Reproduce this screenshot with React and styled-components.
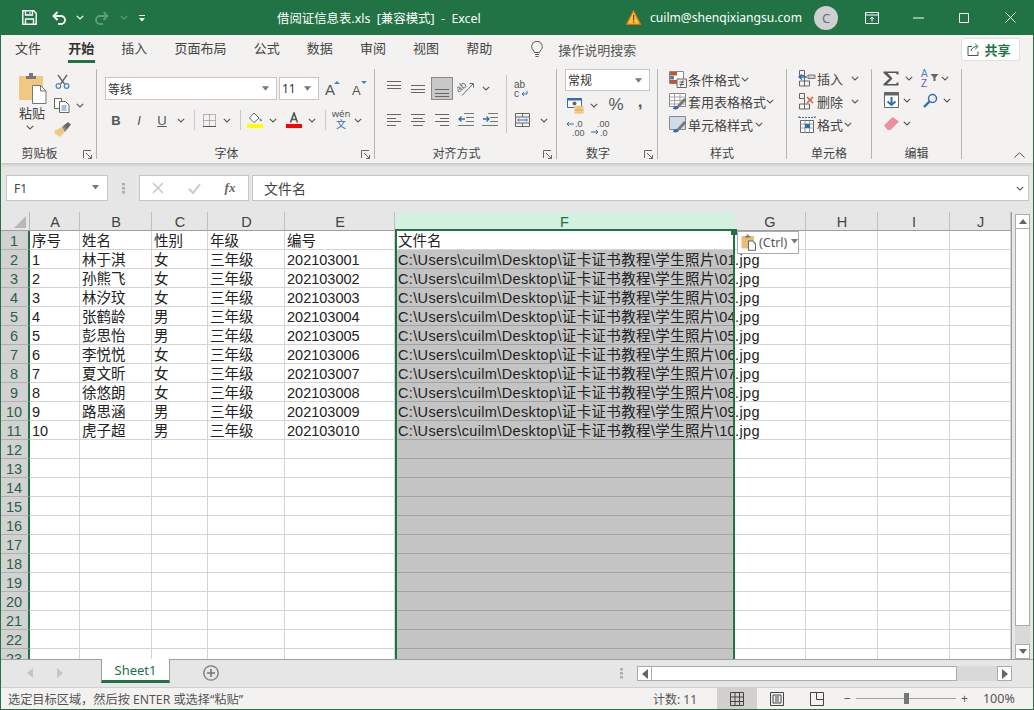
import React from 'react';
import styled, { createGlobalStyle } from 'styled-components';

const Global = createGlobalStyle`
  html, body { margin: 0; padding: 0; background: #e6e6e6; overflow: hidden; }
  * { box-sizing: border-box; }
  svg { display: block; flex: none; }
`;
const UI = `"Noto Sans", "Noto Sans CJK SC", sans-serif`;
const CELL = `"Liberation Sans", "Noto Sans CJK SC", sans-serif`;
const GREEN = '#217346';

const Win = styled.div`
  width: 1034px; height: 710px; display: flex; flex-direction: column; overflow: hidden;
  border: 1px solid ${GREEN}; border-top: 0; background: #e6e6e6; font-family: ${UI}; color: #444;
`;
const TitleBar = styled.div`height: 35px; margin: 0 -1px; background: ${GREEN}; display: flex; align-items: center; color: #fff; font-size: 13px; flex: none;`;
const Slot = styled.div`
  width: ${p => p.$w}px; flex: none; display: flex; align-items: center; justify-content: center; height: 100%;
  margin-left: ${p => p.$ml || 0}px;
`;
const TitleText = styled.div`width: 346px; white-space: pre; font-size: 12.4px;`;
const Email = styled.div`width: 153px; margin-left: 7px; white-space: nowrap; font-size: 12.1px;`;
const Avatar = styled.div`width: 24px; height: 24px; margin-left: 11px; border-radius: 50%; background: #d0d0d0; color: #5b6f8a; font-size: 13px; display: flex; align-items: center; justify-content: center;`;

const Tabs = styled.div`height: 28px; background: #f3f2f1; display: flex; align-items: center; padding-left: 14px; gap: 27px; font-size: 13px; flex: none;`;
const Tab = styled.div`
  height: 28px; line-height: 27px; position: relative; white-space: nowrap; margin-left: ${p => p.$first ? 0 : 0.15}px; font-weight: ${p => p.$active ? 700 : 400}; color: ${p => p.$active ? '#333' : '#444'};
  ${p => p.$active && `&::after { content: ''; position: absolute; left: 0; right: -1px; bottom: 0; height: 3px; background: ${GREEN}; }`}
`;
const Tell = styled.div`display: flex; align-items: center; gap: 15px; margin-left: 12px; white-space: nowrap; color: #555;`;
const Share = styled.div`
  margin-left: auto; margin-right: 13px; width: 59px; height: 23px; background: #fff; border: 1px solid #e1dfdd; border-radius: 2px;
  display: flex; align-items: center; justify-content: center; gap: 3px; padding-right: 3px; color: ${GREEN}; font-weight: 700;
`;

const Ribbon = styled.div`height: 100px; background: #f3f2f1; display: flex; align-items: flex-start; padding-top: 6px; flex: none; box-shadow: 0 2px 3px rgba(0,0,0,.14); position: relative; z-index: 2;`;
const Group = styled.div`width: ${p => p.$w}px; height: 90px; border-right: 1px solid #b4b4b4; display: flex; flex-direction: column; flex: none;`;
const GroupBody = styled.div`flex: 1; min-height: 0; display: flex; padding-left: ${p => p.$pl || 0}px; font-size: 13px;`;
const GroupFoot = styled.div`height: 15px; padding-top: 3px; display: flex; align-items: center; font-size: 12px; color: #444; flex: none;`;
const FootLabel = styled.div`flex: 1; text-align: center;`;
const Launcher = styled.div`width: 18px; display: flex; align-items: center; justify-content: center; padding: 2px 0 0 1px;`;
const Col = styled.div`display: flex; flex-direction: column; flex: none; width: ${p => p.$w ? p.$w + 'px' : 'auto'};`;
const Row = styled.div`display: flex; align-items: center; height: ${p => p.$h}px; margin-top: ${p => p.$mt || 0}px; flex: none;`;
const PasteLabel = styled.div`text-align: center; line-height: 16px; margin-top: 0;`;
const Select = styled.div`
  width: ${p => p.$w}px; height: ${p => p.$h}px; background: #fff; border: 1px solid #c6c6c6; flex: none; margin-right: ${p => p.$mr || 0}px;
  display: flex; align-items: center; justify-content: space-between; padding: 0 7px 0 2px; font-size: 12px; color: #333;
`;
const VSep = styled.div`width: 1px; height: ${p => p.$h}px; background: #c8c8c8; flex: none;`;
const Pressed = styled.div`width: 22px; height: 23px; border: 1px solid #8a8a8a; background: #c8c8c8; display: flex; align-items: center; justify-content: center;`;
const ListText = styled.div`white-space: nowrap; margin-left: ${p => p.$ml ?? 1}px; width: ${p => p.$w ? p.$w + 'px' : 'auto'};`;
const Collapse = styled.div`margin-left: auto; align-self: flex-end; padding: 0 8px 5px 0;`;

const FormulaBar = styled.div`height: 49px; background: #e6e6e6; display: flex; align-items: flex-start; padding: 12px 0 0 5px; flex: none;`;
const NameBox = styled.div`width: 102px; height: 26px; background: #fff; border: 1px solid #c6c6c6; display: flex; align-items: center; justify-content: space-between; padding: 0 7px; font-size: 12px; color: #444;`;
const Grip = styled.div`width: 31px; height: 26px; display: flex; align-items: center; justify-content: center;`;
const FxBox = styled.div`width: 110px; height: 26px; background: #fff; border: 1px solid #c6c6c6; display: flex; align-items: center; font-family: "Liberation Serif", serif; font-style: italic; font-size: 13px; font-weight: 700; color: #666;`;
const Input = styled.div`width: 777px; height: 26px; margin-left: 3px; background: #fff; border: 1px solid #c6c6c6; display: flex; align-items: center; padding-left: 11px; font-size: 14px; color: #444;`;
const FxChevron = styled.div`margin-left: auto; padding-right: 4px;`;

const Sheet = styled.div`height: 447px; display: flex; flex: none;`;
const GridWrap = styled.div`width: 1011px; height: 447px; position: relative; overflow: hidden; border-right: 1px solid #9f9f9f; flex: none;`;
const Grid = styled.div`
  display: grid; grid-template-columns: 29px 50px 72px 56px 77px 110px 339px 72px 72px 72px 61px; grid-auto-rows: 19px;
  font-family: ${CELL}; font-size: 14.5px; color: #222; background: #fff;
`;
const Corner = styled.div`background: #e6e6e6; border-bottom: 1px solid #9f9f9f; border-right: 1px solid #b8b8b8; display: flex; justify-content: flex-end; align-items: flex-end; padding: 0 3px 2px 0;`;
const ColHead = styled.div`
  background: ${p => p.$sel ? '#d3f0e0' : '#e6e6e6'}; color: ${p => p.$sel ? '#1f6e45' : '#444'};
  border-bottom: 1px solid #9f9f9f; border-right: 1px solid ${p => p.$sel ? '#d3f0e0' : '#c0c0c0'};
  text-align: center; line-height: 20px; padding-left: 1px; overflow: hidden;
`;
const RowHead = styled.div`
  background: #d2d2d2; color: #2b6048; border-bottom: 1px solid #b0b0b0; border-right: 2px solid ${GREEN};
  text-align: center; line-height: 20px; padding-right: 1px; overflow: hidden;
`;
const Cell = styled.div`
  background: ${p => p.$sel ? '#c4c4c4' : '#fff'};
  border-bottom: 1px solid ${p => p.$sel ? '#a3a3a3' : '#d4d4d4'}; border-right: 1px solid #d4d4d4;
  padding-left: ${p => p.$pl}px; letter-spacing: ${p => p.$ls || 0}px; line-height: 21px; white-space: nowrap; overflow: hidden;
`;
const SelFrame = styled.div`position: absolute; left: 394px; top: 17px; width: 340px; height: 440px; border: 2px solid ${GREEN}; border-bottom: 0; pointer-events: none;`;
const Handle = styled.div`position: absolute; left: 730px; top: 17px; width: 6px; height: 6px; background: ${GREEN};`;
const PasteTag = styled.div`
  position: absolute; left: 736px; top: 19px; width: 62px; height: 23px; background: #fff; border: 1px solid #ababab;
  display: flex; align-items: center; padding-left: 3px; gap: 3px; font-family: ${UI}; font-size: 12.5px; color: #555;
`;
const VScroll = styled.div`flex: 1; display: flex; flex-direction: column; padding: 2px 0 0 3px; background: #e6e6e6;`;
const ScrollBtn = styled.div`width: ${p => p.$w || 15}px; height: 15px; background: #fff; border: 1px solid #ababab; display: flex; align-items: center; justify-content: center; flex: none;`;
const VThumb = styled.div`width: 15px; height: 397px; background: #fff; border: 1px solid #ababab; border-top: 0; flex: none;`;
const VTrack = styled.div`width: 15px; height: 18px; background: #d9d9d9; flex: none;`;

const SheetBar = styled.div`height: 28px; background: #e6e6e6; border-top: 1px solid #9f9f9f; display: flex; align-items: flex-start; flex: none;`;
const NavSlot = styled.div`width: ${p => p.$w}px; height: 26px; flex: none; display: flex; align-items: center; justify-content: center;`;
const SheetTab = styled.div`
  width: 69px; height: 24px; margin-top: -1px; background: #fff; border: 1px solid #9f9f9f; border-top: 0; border-bottom: 3px solid ${GREEN};
  color: ${GREEN}; font-size: 13px; text-align: center; line-height: 22px; flex: none;
`;
const HScroll = styled.div`display: flex; margin-left: 8px; margin-top: 6px; height: 15px;`;
const HThumb = styled.div`width: 305px; height: 15px; background: #fff; border: 1px solid #ababab; border-left: 0; flex: none;`;
const HTrack = styled.div`width: 40px; height: 15px; background: #d9d9d9; flex: none;`;
const Status = styled.div`height: 22px; background: #f3f2f1; border-top: 1px solid #d0d0d0; display: flex; align-items: center; padding-left: 7px; font-size: 12.2px; color: #555; flex: none;`;
const StatusText = styled.div`width: 645px; white-space: nowrap;`;
const Count = styled.div`width: 64px; white-space: nowrap; font-size: 12px;`;
const ViewBtn = styled.div`width: 40px; height: 21px; background: ${p => p.$on ? '#d2d0ce' : 'transparent'}; display: flex; align-items: center; justify-content: center; flex: none;`;
const Zoomer = styled.div`display: flex; align-items: center; margin-left: 7px; gap: 5px;`;
const Track = styled.div`width: 100px; height: 1px; background: #a0a0a0; position: relative;`;
const Thumb = styled.div`position: absolute; left: 48px; top: -5px; width: 5px; height: 11px; background: #777;`;
const Pct = styled.div`margin-left: 15px; font-size: 12.5px;`;

const Chev = ({ c = '#555' }) => <svg width="8" height="5" viewBox="0 0 8 5"><path d="M.8.8 4 4 7.2.8" fill="none" stroke={c} strokeWidth="1.1" /></svg>;
const Drop = ({ c = '#777', up, w = 8 }) => <svg width={w} height="5" viewBox="0 0 8 5"><path d={up ? 'M0 5h8L4 0z' : 'M0 0h8L4 5z'} fill={c} /></svg>;
const Launch = () => <svg width="9" height="9" viewBox="0 0 9 9"><path d="M.5 8V.5H8M8.5 8.5 3 3M8.5 5v3.5H5" fill="none" stroke="#666" /></svg>;

const Save = () => <svg width="15" height="15" viewBox="0 0 15 15" fill="none" stroke="#fff" strokeWidth="1.4"><path d="M.8.8h11l2.400 2.400v11H.8z" /><path d="M3.500 1v4h7V1M3.500 14V9h8v5" /><path d="M8 2.200v1.600" /></svg>;
const Undo = ({ c = '#fff', flip }) => <svg width="15" height="14" viewBox="0 0 15 14" fill="none" stroke={c} strokeWidth="1.8" style={flip ? { transform: 'scaleX(-1)' } : undefined}><path d="M5.500 1 1.500 5l4 4" /><path d="M2 5h7a4 4 0 0 1 0 8H6" /></svg>;
const Custom = () => <svg width="8" height="8" viewBox="0 0 8 8"><path d="M1 1h6v1H1z" fill="#fff" /><path d="M1 4h6L4 7.500z" fill="#fff" /></svg>;
const Warn = () => <svg width="15" height="15" viewBox="0 0 15 15"><path d="M7.500 .8 14.600 14.400H.4z" fill="#f6c23c" stroke="#d96f14" strokeWidth="1.2" /><path d="M7 5h1.200v5.400H7zM7 11.400h1.200v1.300H7z" fill="#6b3c10" /></svg>;
const RibbonOpt = () => <svg width="14" height="12" viewBox="0 0 14 12" fill="none" stroke="#fff"><path d="M.5.500h13v11H.5zM.5 3h13" /><path d="M7 9.500V5M5 7l2-2 2 2" /></svg>;
const Min = () => <svg width="11" height="2" viewBox="0 0 11 2"><path d="M0 1h11" stroke="#fff" /></svg>;
const Max = () => <svg width="10" height="10" viewBox="0 0 10 10"><path d="M.5.500h9v9h-9z" fill="none" stroke="#fff" /></svg>;
const Close = () => <svg width="11" height="11" viewBox="0 0 11 11"><path d="M.5.500l10 10M10.500.500l-10 10" stroke="#fff" /></svg>;
const Bulb = () => <svg width="12" height="17" viewBox="0 0 12 17" fill="none" stroke="#555"><path d="M3.500 11.500C3 9.500.7 8.500.7 5.600a5.300 5.300 0 0 1 10.600 0c0 2.900-2.300 3.900-2.800 5.900z" /><path d="M4 13.500h4M4.500 15.500h3" /></svg>;
const ShareIc = () => <svg width="14" height="14" viewBox="0 0 14 14" fill="none" stroke="#555"><path d="M5 4.500H1v9h10v-4" /><path d="M4 9c.5-3 3-4.500 6-4.500M8 1.500l3 3-3 3" stroke={GREEN} /></svg>;

const PasteIc = () => <svg width="29" height="31" viewBox="0 0 29 31"><path d="M1 3h24v24H1z" fill="#f0c87f" /><path d="M8 3h10v3H8zM11 0h4v3h-4z" fill="#777" /><path d="M14.500 12.500h8l5.500 5.500v12.500H14.500z" fill="#fff" stroke="#777" /><path d="M22.500 12.500V18H28" fill="none" stroke="#777" /></svg>;
const Scissors = () => <svg width="15" height="15" viewBox="0 0 15 15" fill="none"><path d="M3 1l6.500 9M12 1 5.500 10" stroke="#666" strokeWidth="1.3" /><circle cx="3.400" cy="12" r="2.300" stroke="#4d82b8" strokeWidth="1.200" /><circle cx="11.600" cy="12" r="2.300" stroke="#4d82b8" strokeWidth="1.200" /></svg>;
const Copy = () => <svg width="16" height="15" viewBox="0 0 16 15" fill="#fff" stroke="#666"><path d="M.5.500h7v10h-7z" /><path d="M5.500 3.500h6l3.500 3.500v7.500H5.500z" /><path d="M7.500 8h5M7.500 10h5M7.500 12h5" stroke="#4d82b8" /></svg>;
const Brush = () => <svg width="17" height="15" viewBox="0 0 17 15"><path d="M0 9 8 5l3 5-5 4.500H4L3 12l-1 1z" fill="#efc781" /><path d="M8.500 4.500 14 0l3 2.500-4 5z" fill="#666" /><path d="M8 5l3 5 2-2.500-3-4z" fill="#888" /></svg>;
const GrowA = ({ small }) => <svg width="16" height="17" viewBox="0 0 16 17"><text x="0" y="15" fontFamily="Liberation Sans" fontSize={small ? 13 : 15} fill="#555">A</text><path d={small ? 'M9 1h6l-3 3z' : 'M9 4h6l-3-3z'} fill="#4d82b8" /></svg>;
const BItalic = styled.span`font-family: "Liberation Sans", sans-serif; font-size: 13px; color: #555; font-weight: ${p => p.$b ? 700 : 400}; font-style: ${p => p.$i ? 'italic' : 'normal'}; text-decoration: ${p => p.$u ? 'underline' : 'none'};`;
const Borders = () => <svg width="13" height="13" viewBox="0 0 13 13" fill="none" stroke="#777" strokeDasharray="1 1"><path d="M.5.500h12v12H.500zM6.500.500v12M.500 6.500h12" /><path d="M0 12.500h13" stroke="#555" strokeDasharray="none" /></svg>;
const Fill = () => <svg width="16" height="16" viewBox="0 0 16 16"><path d="M7 1 2.500 6 7 10.500 12 6z" fill="#fff" stroke="#666" /><path d="M12.500 6.500c2 0 2.500 1.500 2.500 2.500h-2z" fill="#4d82b8" /><path d="M0 12h16v4H0z" fill="#ff0" /></svg>;
const FontColor = () => <svg width="16" height="16" viewBox="0 0 16 16"><path d="M4.500 10.500 8 1l3.500 9.500M5.800 7.500h4.400" fill="none" stroke="#555" strokeWidth="1.600" /><path d="M0 12h16v4H0z" fill="#f00" /></svg>;
const WenIc = () => <svg width="18" height="22" viewBox="0 0 18 22"><text x="9" y="8" textAnchor="middle" fontFamily="Noto Sans" fontSize="9.500" fill="#555">wén</text><text x="9" y="19" textAnchor="middle" fontFamily="Noto Sans CJK SC" fontSize="10" fill="#2f6db5">文</text></svg>;

const Lines = ({ y, n = 3, gap = 3.5, indent = [], h = 18 }) => (
  <svg width="14" height={h} viewBox={`0 0 14 ${h}`}>
    {Array.from({ length: n }, (_, i) => {
      const a = indent[i] || [0, 14];
      return <path key={i} d={`M${a[0]} ${Math.round(y + i * gap) + .5}H${a[1]}`} stroke="#666" />;
    })}
  </svg>
);
const Indent = ({ right }) => <svg width="16" height="14" viewBox="0 0 16 14" fill="none"><path d="M6 .5h10M8 4.500h8M8 8.500h8M0 12.500h16" stroke="#777" /><path d={right ? 'M1 6h6M4.500 3.500 7 6 4.500 8.500' : 'M1 6h6M3.500 3.500 1 6l2.500 2.500'} stroke="#2f6db5" strokeWidth="1.300" /></svg>;
const Orient = () => <svg width="18" height="17" viewBox="0 0 18 17" fill="none"><text x="0" y="10" transform="rotate(-40 5 9)" fontFamily="Liberation Sans" fontSize="10" fill="#666" stroke="none">ab</text><path d="M5 15.500 16 4M12.500 3.500h4v4" stroke="#666" /></svg>;
const WrapIc = () => <svg width="16" height="18" viewBox="0 0 16 18"><text x="0" y="8" fontSize="10" fontFamily="Liberation Sans" fill="#555">ab</text><text x="0" y="17" fontSize="10" fontFamily="Liberation Sans" fill="#555">c</text><path d="M13 11v3H8m2-2-2 2 2 2" fill="none" stroke="#2f6db5" /></svg>;
const Merge = () => <svg width="15" height="14" viewBox="0 0 15 14" fill="none" stroke="#666"><path d="M.5.500h14v13H.5zM.5 4h14M.5 10h14M7.500 10v3.500M7.500.500V4" /><path d="M3 7h9M4 5.500 2.500 7 4 8.500M11 5.500 12.500 7 11 8.500" stroke="#2f6db5" /></svg>;
const Currency = () => <svg width="18" height="17" viewBox="0 0 18 17"><path d="M.5 1.500h14v9H.5z" fill="#fff" stroke="#2f6db5" /><path d="M.5 1.500h14v2H.5z" fill="#2f6db5" /><circle cx="7.500" cy="6.500" r="2" fill="#666" /><ellipse cx="12" cy="10" rx="5" ry="1.600" fill="#f0c87f" /><ellipse cx="12" cy="12.800" rx="5" ry="1.600" fill="#e9b85f" /><ellipse cx="12" cy="15.300" rx="5" ry="1.500" fill="#f0c87f" /></svg>;
const Pct2 = styled.span`font-family: "Liberation Sans", sans-serif; font-size: 17px; color: #555;`;
const Comma = styled.span`font-family: "Liberation Sans", sans-serif; font-size: 17px; font-weight: 700; color: #555; line-height: 10px; padding-bottom: 6px;`;
const DecIc = ({ inc }) => <svg width="20" height="18" viewBox="0 0 20 18">
  <text x={inc ? 6 : 9} y="8" fontFamily="Liberation Sans" fontSize="9" fill="#555">{inc ? '.00' : '.0'}</text>
  <text x={inc ? 9 : 6} y="17" fontFamily="Liberation Sans" fontSize="9" fill="#555">{inc ? '.0' : '.00'}</text>
  <path d={inc ? 'M0 13h7M5 11l2 2-2 2' : 'M1 5h7M3 3 1 5l2 2'} fill="none" stroke="#2f6db5" />
</svg>;
const CondFmt = () => <svg width="18" height="17" viewBox="0 0 18 17"><path d="M.5.500h14v12H.500z" fill="#fff" stroke="#888" /><path d="M1 1h7v3.500H1z" fill="#c8502d" /><path d="M1 5h4v3.500H1z" fill="#4d82b8" /><path d="M1 9h7v3.500H1z" fill="#c8502d" /><path d="M8 8h9.500v8.500H8z" fill="#f3f2f1" stroke="#666" /><path d="M10.500 11h4.500M10.500 13.500h4.500M14 9.500l-2.500 6" stroke="#555" /></svg>;
const TableFmt = ({ cell }) => <svg width="18" height="17" viewBox="0 0 18 17"><path d="M.5.500h16v13H.500z" fill={cell ? '#cfdcec' : '#fff'} stroke="#888" />{!cell && <path d="M.5 4h16M.5 7.500h16M.5 11h16M5.500.500v13M11 .500v13" stroke="#a5a5a5" />}<path d="M8 13 15 5l2.500 2-7 7z" fill="#777" /><path d="M4 16c0-3 4-4 6-2 0 2-3 3-6 2z" fill="#2f6db5" /></svg>;
const CellIns = ({ del }) => <svg width="18" height="17" viewBox="0 0 18 17" fill="none"><path d="M1.500.500h5v5h-5zM1.500 11h5v5h-5zM6.500 11h5v5h-5z" stroke="#666" /><path d="M1.500 5.500h5v5.500" stroke="#666" />{del
  ? <path d="M9 4l6 6M15 4l-6 6" stroke="#d9623b" strokeWidth="1.600" />
  : <><path d="M10 5h7v3.500h-7z" fill="#d0d0d0" stroke="#777" /><path d="M1 7h8M4 4.500 1 7l3 2.500" stroke="#2f6db5" strokeWidth="1.400" /></>}</svg>;
const CellFmt = () => <svg width="18" height="17" viewBox="0 0 18 17" fill="none"><path d="M2.500 4.500h13v12h-13z" fill="#fff" stroke="#666" /><path d="M2.500 8h13M2.500 12h13M7 4.500v12M11.500 4.500v12" stroke="#999" /><path d="M7 8h5v4H7z" fill="#2f6db5" /><path d="M1 1.500h16M1 0v3M17 0v3" stroke="#2f6db5" strokeDasharray="2 1" /></svg>;
const Sigma = () => <svg width="16" height="15" viewBox="0 0 16 15"><path d="M.5.500h15v3h-1.500l-1-1.500H4.500l5 5.500-5.500 5.500h9l1-1.500h1.500v3H.500v-1.500L6.500 7.500.5 2z" fill="#555" /></svg>;
const SortIc = () => <svg width="18" height="19" viewBox="0 0 18 19"><text x="0" y="8" fontFamily="Liberation Sans" fontSize="10" fill="#4d82b8">A</text><text x="0" y="18" fontFamily="Liberation Sans" fontSize="10" fill="#8a4cb0">Z</text><path d="M9.500 5h8l-3 3.500V12h-2V8.500z" fill="#666" /></svg>;
const FillDown = () => <svg width="15" height="16" viewBox="0 0 15 16"><path d="M.5.500h14v15H.5z" fill="#fff" stroke="#666" /><path d="M.5.500h14v3H.5z" fill="#666" /><path d="M7.500 5v8M3.500 9.500l4 3.500 4-3.500" fill="none" stroke="#2f6db5" strokeWidth="2" /></svg>;
const Find = () => <svg width="15" height="15" viewBox="0 0 15 15" fill="none" stroke="#2f6db5"><circle cx="9.500" cy="5.500" r="4" strokeWidth="1.500" /><path d="M6.500 8.500 1 14" strokeWidth="2.400" /></svg>;
const Eraser = () => <svg width="15" height="13" viewBox="0 0 15 13"><path d="M0 8.500 8.500 0 15 4.500 6.500 13H3.500z" fill="#e98f9e" /></svg>;
const Caret = () => <svg width="9" height="7" viewBox="0 0 9 7"><path d="M1 0h7L4.500 4.500z" fill="#777" /></svg>;
const XIc = ({ c }) => <svg width="12" height="12" viewBox="0 0 12 12"><path d="M1 1l10 10M11 1 1 11" stroke={c} strokeWidth="1.600" /></svg>;
const CheckIc = () => <svg width="13" height="11" viewBox="0 0 13 11"><path d="M1 6l4 4 7-9" fill="none" stroke="#c8c8c8" strokeWidth="2" /></svg>;
const GripDots = () => <svg width="3" height="11" viewBox="0 0 3 11"><path d="M0 0h3v2.500H0zM0 4h3v2.500H0zM0 8h3v2.500H0z" fill="#adadad" /></svg>;
const CornerIc = () => <svg width="12" height="12" viewBox="0 0 12 12"><path d="M12 0v12H0z" fill="#b8b8b8" /></svg>;
const Arrow = ({ left, c = '#666', s = 6 }) => <svg width={s} height="10" viewBox="0 0 6 10"><path d={left ? 'M6 0v10L0 5z' : 'M0 0v10l6-5z'} fill={c} /></svg>;
const PlusCircle = () => <svg width="16" height="16" viewBox="0 0 16 16" fill="none" stroke="#777"><circle cx="8" cy="8" r="7.200" strokeWidth="1.300" /><path d="M8 4v8M4 8h8" strokeWidth="1.600" /></svg>;
const ViewNormal = () => <svg width="14" height="14" viewBox="0 0 14 14" fill="none" stroke="#444"><path d="M.5.500h13v13H.5zM5 .500v13M9.500 .500v13M.5 5h13M.5 9.500h13" /></svg>;
const ViewPage = () => <svg width="14" height="14" viewBox="0 0 14 14" fill="none" stroke="#444"><path d="M.5.500h13v13H.5zM3 3h8v8H3zM5 5h4M5 7h4M5 9h4" /></svg>;
const ViewBreak = () => <svg width="14" height="14" viewBox="0 0 14 14" fill="none" stroke="#444"><path d="M.5.500h13v13H.5zM6.500 .500v7h7" /></svg>;
const MiniPaste = () => <svg width="15" height="17" viewBox="0 0 29 31"><path d="M1 3h24v24H1z" fill="#e9bd74" /><path d="M8 3h10v3H8zM11 0h4v3h-4z" fill="#777" /><path d="M14.500 12.500h8l5.500 5.500v12.500H14.500z" fill="#fff" stroke="#666" strokeWidth="2" /></svg>;

const cols = ['A', 'B', 'C', 'D', 'E', 'F', 'G', 'H', 'I', 'J'];
const head = ['序号', '姓名', '性别', '年级', '编号', '文件名'];
const people = [['林于淇', '女'], ['孙熊飞', '女'], ['林汐玟', '女'], ['张鹤龄', '男'], ['彭思怡', '男'], ['李悦悦', '女'], ['夏文昕', '女'], ['徐悠朗', '女'], ['路思涵', '男'], ['虎子超', '男']];
const pad = n => String(n).padStart(2, '0');

const rowValues = r => {
  if (r === 1) return [...head, '', '', '', ''];
  const i = r - 2;
  if (i < people.length) {
    return [String(i + 1), people[i][0], people[i][1], '三年级', `2021030${pad(i + 1)}`, `C:\\Users\\cuilm\\Desktop\\证卡证书教程\\学生照片\\${pad(i + 1)}`, '.jpg', '', '', ''];
  }
  return Array(10).fill('');
};

const IconRow = ({ items }) => items.map((it, i) => <Slot key={i} $w={it[0]}>{it[1]}</Slot>);

export default function App() {
  return (
    <Win>
      <Global />
      <TitleBar>
        <Slot $w={14} />
        <Slot $w={30}><Save /></Slot>
        <Slot $w={30}><Undo /></Slot>
        <Slot $w={12}><Chev c="#fff" /></Slot>
        <Slot $w={24} $ml={3}><Undo flip c="#5f9d7d" /></Slot>
        <Slot $w={12} $ml={5}><Chev c="#5f9d7d" /></Slot>
        <Slot $w={18} $ml={3}><Custom /></Slot>
        <Slot $w={126} />
        <TitleText>借阅证信息表.xls  [兼容模式]  -  Excel</TitleText>
        <Slot $w={20}><Warn /></Slot>
        <Email>cuilm@shenqixiangsu.com</Email>
        <Avatar>C</Avatar>
        <Slot $w={22} />
        <Slot $w={24}><RibbonOpt /></Slot>
        <Slot $w={46} $ml={11}><Min /></Slot>
        <Slot $w={46}><Max /></Slot>
        <Slot $w={46}><Close /></Slot>
      </TitleBar>
      <Tabs>
        <Tab $first>文件</Tab><Tab $active>开始</Tab><Tab>插入</Tab><Tab>页面布局</Tab><Tab>公式</Tab><Tab>数据</Tab><Tab>审阅</Tab><Tab>视图</Tab><Tab>帮助</Tab>
        <Tell><Bulb />操作说明搜索</Tell>
        <Share><ShareIc />共享</Share>
      </Tabs>
      <Ribbon>
        <Group $w={96}>
          <GroupBody $pl={14}>
            <Col $w={34}>
              <Row $h={33} $mt={3}><Slot $w={34}><PasteIc /></Slot></Row>
              <PasteLabel>粘贴</PasteLabel>
              <Row $h={12}><Slot $w={30}><Chev /></Slot></Row>
            </Col>
            <Col $w={50}>
              <Row $h={24}><Slot $w={26}><Scissors /></Slot></Row>
              <Row $h={24}><Slot $w={26}><Copy /></Slot><Slot $w={10}><Chev /></Slot></Row>
              <Row $h={24}><Slot $w={26}><Brush /></Slot></Row>
            </Col>
          </GroupBody>
          <GroupFoot><FootLabel>剪贴板</FootLabel><Launcher><Launch /></Launcher></GroupFoot>
        </Group>
        <Group $w={278}>
          <GroupBody $pl={8}>
            <Col>
              <Row $h={23} $mt={8}>
                <Select $w={172} $h={23} $mr={2}>等线<Drop w={7} /></Select>
                <Select $w={40} $h={23}>11<Drop w={7} /></Select>
                <Slot $w={28}><GrowA /></Slot>
                <Slot $w={22} $ml={2}><GrowA small /></Slot>
              </Row>
              <Row $h={20} $mt={10}>
                <IconRow items={[
                  [22, <BItalic $b>B</BItalic>], [24, <BItalic $i>I</BItalic>], [22, <BItalic $u>U</BItalic>], [16, <Chev />],
                  [10, <VSep $h={20} />], [20, <Borders />], [16, <Chev />], [10, <VSep $h={20} />],
                  [20, <Fill />], [16, <Chev />], [26, <FontColor />], [10, <Chev />], [16, <VSep $h={20} />],
                  [16, <WenIc />], [17, <Chev />],
                ]} />
              </Row>
            </Col>
          </GroupBody>
          <GroupFoot><FootLabel>字体</FootLabel><Launcher><Launch /></Launcher></GroupFoot>
        </Group>
        <Group $w={182}>
          <GroupBody $pl={7}>
            <Col $w={124}>
              <Row $h={23} $mt={8}>
                <Slot $w={24}><Lines y={1} /></Slot>
                <Slot $w={24}><Lines y={5} /></Slot>
                <Slot $w={24}><Pressed><Lines y={9} /></Pressed></Slot>
                <Slot $w={24}><Orient /></Slot>
                <Slot $w={16}><Chev /></Slot>
              </Row>
              <Row $h={20} $mt={10}>
                <Slot $w={24}><Lines y={3} n={4} indent={[[0, 14], [0, 9], [0, 14], [0, 9]]} /></Slot>
                <Slot $w={24}><Lines y={3} n={4} indent={[[0, 14], [2, 12], [0, 14], [2, 12]]} /></Slot>
                <Slot $w={24}><Lines y={3} n={4} indent={[[0, 14], [5, 14], [0, 14], [5, 14]]} /></Slot>
                <Slot $w={24}><Indent /></Slot>
                <Slot $w={24}><Indent right /></Slot>
              </Row>
            </Col>
            <Col $w={1}><Row $h={58} $mt={6}><VSep $h={58} /></Row></Col>
            <Col>
              <Row $h={23} $mt={8}><Slot $w={30}><WrapIc /></Slot></Row>
              <Row $h={20} $mt={10}><Slot $w={30}><Merge /></Slot><Slot $w={4} /><Slot $w={6}><Chev /></Slot></Row>
            </Col>
          </GroupBody>
          <GroupFoot><FootLabel>对齐方式</FootLabel><Launcher><Launch /></Launcher></GroupFoot>
        </Group>
        <Group $w={101}>
          <GroupBody $pl={8}>
            <Col>
              <Select $w={85} $h={22}>常规<Drop w={7} /></Select>
              <Row $h={22} $mt={3}>
                <IconRow items={[[22, <Currency />], [14, <Chev />], [30, <Pct2>%</Pct2>], [18, <Comma>,</Comma>]]} />
              </Row>
              <Row $h={22} $mt={1}>
                <IconRow items={[[22, <DecIc />], [2, null], [24, <DecIc inc />]]} />
              </Row>
            </Col>
          </GroupBody>
          <GroupFoot><FootLabel>数字</FootLabel><Launcher><Launch /></Launcher></GroupFoot>
        </Group>
        <Group $w={129}>
          <GroupBody $pl={11}>
            <Col>
              <Row $h={20}><CondFmt /><ListText>条件格式</ListText><Slot $w={10}><Chev /></Slot></Row>
              <Row $h={23} $mt={1}><TableFmt /><ListText>套用表格格式</ListText><Slot $w={8}><Chev /></Slot></Row>
              <Row $h={23}><TableFmt cell /><ListText>单元格样式</ListText><Slot $w={11}><Chev /></Slot></Row>
            </Col>
          </GroupBody>
          <GroupFoot><FootLabel>样式</FootLabel></GroupFoot>
        </Group>
        <Group $w={85}>
          <GroupBody $pl={11}>
            <Col>
              <Row $h={19}><CellIns /><ListText $w={26}>插入</ListText><Slot $w={24}><Chev /></Slot></Row>
              <Row $h={23} $mt={2}><CellIns del /><ListText $w={26}>删除</ListText><Slot $w={24}><Chev /></Slot></Row>
              <Row $h={23}><CellFmt /><ListText $w={26}>格式</ListText><Slot $w={10}><Chev /></Slot></Row>
            </Col>
          </GroupBody>
          <GroupFoot><FootLabel>单元格</FootLabel></GroupFoot>
        </Group>
        <Group $w={90}>
          <GroupBody $pl={11}>
            <Col>
              <Row $h={19}><Slot $w={16}><Sigma /></Slot><Slot $w={19}><Chev /></Slot><Slot $w={18} $ml={3}><SortIc /></Slot><Slot $w={12}><Chev /></Slot></Row>
              <Row $h={24}><Slot $w={16}><FillDown /></Slot><Slot $w={15}><Chev /></Slot><Slot $w={20} $ml={6}><Find /></Slot><Slot $w={14}><Chev /></Slot></Row>
              <Row $h={23}><Slot $w={16}><Eraser /></Slot><Slot $w={15}><Chev /></Slot></Row>
            </Col>
          </GroupBody>
          <GroupFoot><FootLabel>编辑</FootLabel></GroupFoot>
        </Group>
        <Collapse><svg width="11" height="6" viewBox="0 0 11 6"><path d="M.5 5.500 5.500.8l5 4.700" fill="none" stroke="#555" /></svg></Collapse>
      </Ribbon>
      <FormulaBar>
        <NameBox>F1<Caret /></NameBox>
        <Grip><GripDots /></Grip>
        <FxBox>
          <Slot $w={36}><XIc c="#c8c8c8" /></Slot>
          <Slot $w={37}><CheckIc /></Slot>
          <Slot $w={34}>fx</Slot>
        </FxBox>
        <Input>文件名<FxChevron><Chev /></FxChevron></Input>
      </FormulaBar>
      <Sheet>
        <GridWrap>
          <Grid>
            <Corner><CornerIc /></Corner>
            {cols.map(c => <ColHead key={c} $sel={c === 'F'}>{c}</ColHead>)}
            {Array.from({ length: 23 }, (_, k) => k + 1).map(r => (
              <React.Fragment key={r}>
                <RowHead>{r}</RowHead>
                {rowValues(r).map((v, ci) => (
                  <Cell key={ci} $sel={ci === 5 && r > 1} $pl={ci === 5 ? 3 : ci === 6 ? 1 : 2} $ls={(ci === 5 || ci === 6) && r > 1 ? 0.36 : 0}>{v}</Cell>
                ))}
              </React.Fragment>
            ))}
          </Grid>
          <SelFrame />
          <Handle />
          <PasteTag><MiniPaste />(Ctrl)<Caret /></PasteTag>
        </GridWrap>
        <VScroll>
          <ScrollBtn><Drop c="#666" up /></ScrollBtn>
          <VThumb />
          <VTrack />
          <ScrollBtn><Drop c="#666" /></ScrollBtn>
        </VScroll>
      </Sheet>
      <SheetBar>
        <NavSlot $w={14} />
        <NavSlot $w={30}><Arrow left c="#c4c4c4" /></NavSlot>
        <NavSlot $w={29}><Arrow c="#c4c4c4" /></NavSlot>
        <NavSlot $w={27} />
        <SheetTab>Sheet1</SheetTab>
        <NavSlot $w={24} />
        <NavSlot $w={33}><PlusCircle /></NavSlot>
        <NavSlot $w={386} />
        <NavSlot $w={16}><GripDots /></NavSlot>
        <HScroll>
          <ScrollBtn><Arrow left /></ScrollBtn>
          <HThumb />
          <HTrack />
          <ScrollBtn><Arrow /></ScrollBtn>
        </HScroll>
      </SheetBar>
      <Status>
        <StatusText>选定目标区域，然后按 ENTER 或选择“粘贴”</StatusText>
        <Count>计数: 11</Count>
        <ViewBtn $on><ViewNormal /></ViewBtn>
        <ViewBtn><ViewPage /></ViewBtn>
        <ViewBtn><ViewBreak /></ViewBtn>
        <Zoomer>
          <span>−</span>
          <Track><Thumb /></Track>
          <span>+</span>
        </Zoomer>
        <Pct>100%</Pct>
      </Status>
    </Win>
  );
}
